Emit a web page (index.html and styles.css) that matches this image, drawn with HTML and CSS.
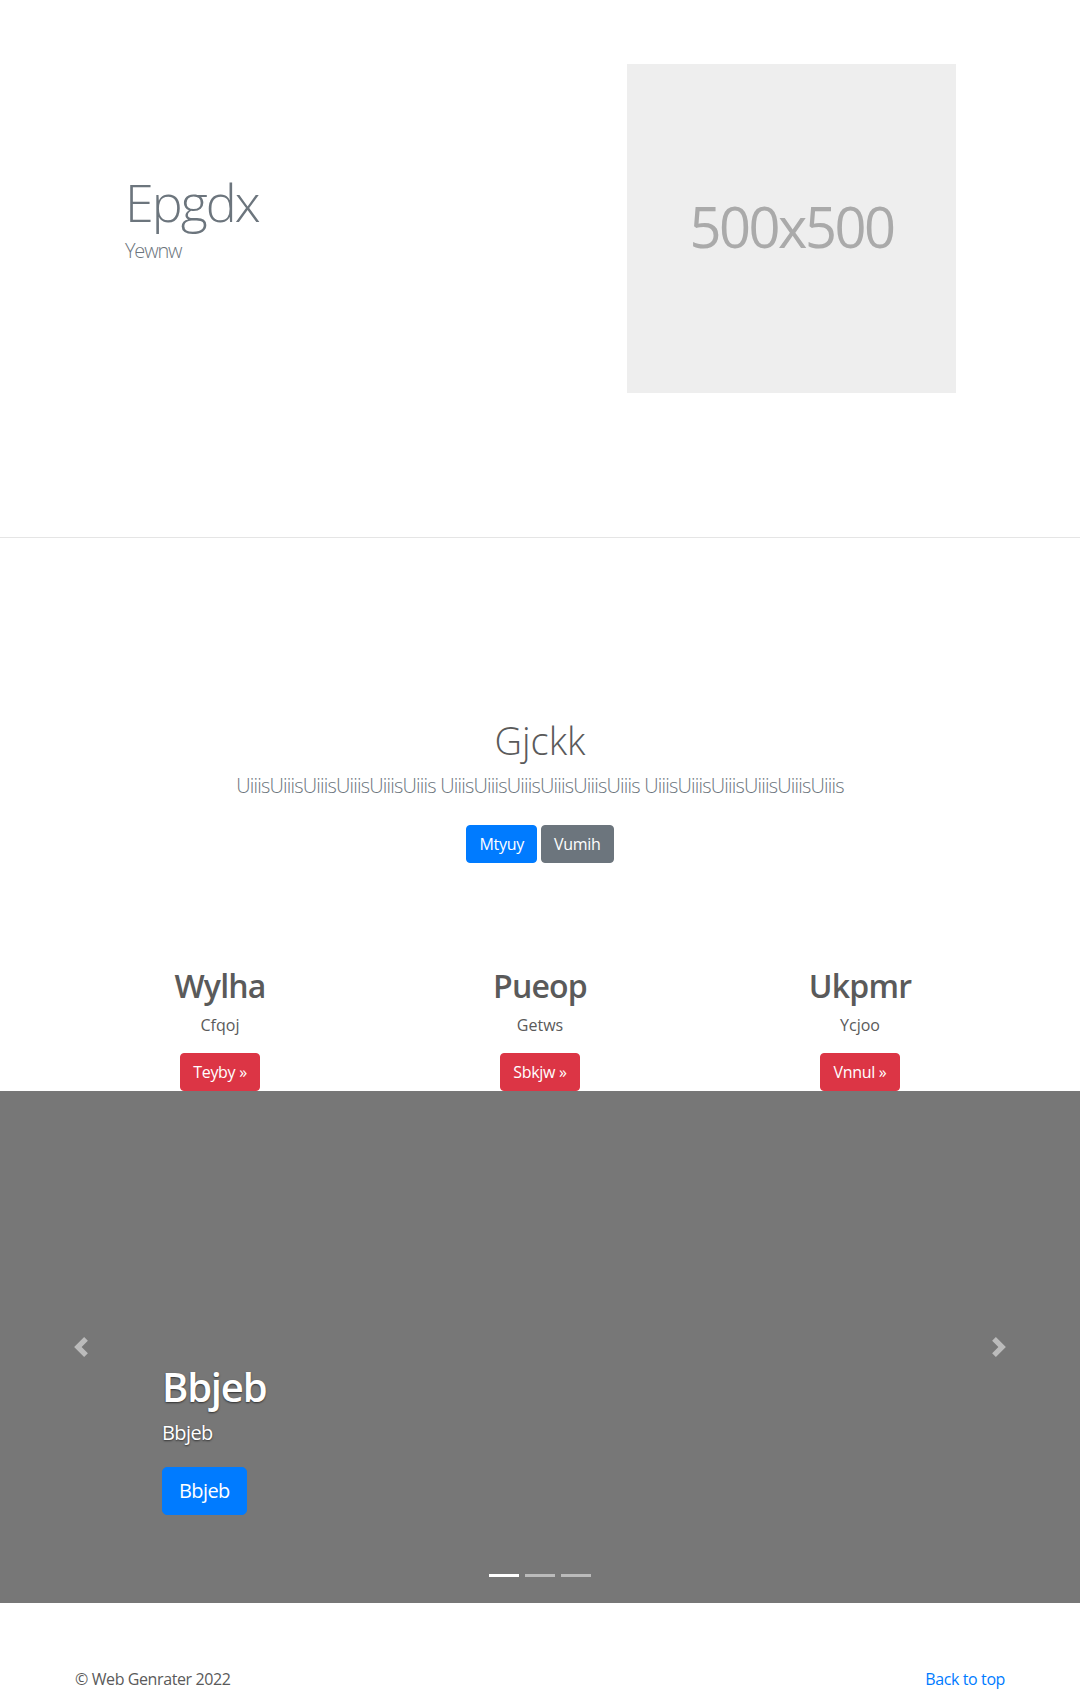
FILE: index.html
```html
<!DOCTYPE html>
<html lang="en">
<head>
<meta charset="utf-8">
<title>Web Genrater</title>
<link rel="stylesheet" href="styles.css">
</head>
<body>
<section class="hero">
  <div class="container hero-row">
    <div class="hero-text">
      <h1 class="hero-title">Epgdx</h1>
      <p class="hero-sub">Yewnw</p>
    </div>
    <div class="hero-media">
      <div class="placeholder"><span>500x500</span></div>
    </div>
  </div>
</section>

<section class="jumbo">
  <div class="jumbo-inner">
    <h1 class="jumbo-title">Gjckk</h1>
    <p class="lead">UiiisUiiisUiiisUiiisUiiisUiiis UiiisUiiisUiiisUiiisUiiisUiiis UiiisUiiisUiiisUiiisUiiisUiiis</p>
    <p class="jumbo-actions"><a class="btn btn-primary" href="#">Mtyuy</a> <a class="btn btn-secondary" href="#">Vumih</a></p>
  </div>
</section>

<section class="container marketing">
  <div class="col">
    <h2>Wylha</h2>
    <p>Cfqoj</p>
    <p class="col-action"><a class="btn btn-danger" href="#">Teyby &raquo;</a></p>
  </div>
  <div class="col">
    <h2>Pueop</h2>
    <p>Getws</p>
    <p class="col-action"><a class="btn btn-danger" href="#">Sbkjw &raquo;</a></p>
  </div>
  <div class="col">
    <h2>Ukpmr</h2>
    <p>Ycjoo</p>
    <p class="col-action"><a class="btn btn-danger" href="#">Vnnul &raquo;</a></p>
  </div>
</section>

<div class="carousel">
  <div class="carousel-item">
    <div class="carousel-caption">
      <h1>Bbjeb</h1>
      <p class="caption-text">Bbjeb</p>
      <p class="caption-action"><a class="btn btn-lg btn-primary" href="#">Bbjeb</a></p>
    </div>
  </div>
  <ol class="indicators">
    <li class="active"></li>
    <li></li>
    <li></li>
  </ol>
  <a class="control control-prev" href="#" aria-label="Previous">
    <svg class="control-icon" viewBox="0 0 8 8" width="20" height="20"><path fill="#fff" d="M5.25 0l-4 4 4 4 1.5-1.5L4.25 4l2.5-2.5L5.25 0z"/></svg>
  </a>
  <a class="control control-next" href="#" aria-label="Next">
    <svg class="control-icon" viewBox="0 0 8 8" width="20" height="20"><path fill="#fff" d="M2.75 0l-1.5 1.5L3.75 4l-2.5 2.5L2.75 8l4-4-4-4z"/></svg>
  </a>
</div>

<footer class="container footer">
  <p class="copy">&copy; Web Genrater 2022</p>
  <p class="totop"><a href="#">Back to top</a></p>
</footer>
</body>
</html>
```

FILE: styles.css
```css
* { box-sizing: border-box; }

html, body {
  margin: 0;
  padding: 0;
}

body {
  font-family: "Open Sans", "Noto Sans", "Liberation Sans", sans-serif;
  font-size: 16px;
  line-height: 1.5;
  color: #5a5a5a;
  background: #fff;
  overflow: hidden;
}

a { color: #007bff; text-decoration: none; }

.container {
  width: 960px;
  margin: 0 auto;
}

/* Hero */
.hero {
  height: 538px;
  border-bottom: 1px solid #e5e5e5;
  padding-top: 64px;
}

.hero-row {
  display: flex;
}

.hero-text {
  width: 480px;
  padding-left: 65px;
  padding-top: 107px;
}

.hero-title {
  margin: 0;
  font-size: 52px;
  font-weight: 300;
  line-height: 1.2;
  color: #6c757d;
  letter-spacing: -2px;
}

.hero-sub {
  margin: 3px 0 0;
  font-size: 20px;
  font-weight: 300;
  line-height: 1.5;
  color: #6c757d;
  letter-spacing: -1.2px;
}

.hero-media {
  width: 480px;
  padding-left: 87px;
}

.placeholder {
  width: 329px;
  height: 329px;
  background: #eee;
  display: flex;
  align-items: center;
  justify-content: center;
}

.placeholder span {
  font-size: 56px;
  color: #aaa;
  letter-spacing: -2.5px;
  margin-top: -6px;
}

/* Jumbotron */
.jumbo {
  padding-top: 180px;
  text-align: center;
}

.jumbo-inner {
  width: 640px;
  margin: 0 auto;
}

.jumbo-title {
  margin: 0 0 7px;
  font-size: 38px;
  font-weight: 300;
  line-height: 1.2;
  color: #5a5a5a;
}

.lead {
  margin: 0 0 16px;
  font-size: 20px;
  font-weight: 300;
  line-height: 1.5;
  color: #6c757d;
  white-space: nowrap;
  letter-spacing: -0.8px;
}

.jumbo-actions {
  margin: 0;
}

.btn {
  display: inline-block;
  font-size: 16px;
  line-height: 1.5;
  padding: 6px 12px;
  border: 1px solid transparent;
  border-radius: 4px;
  color: #fff;
  margin: 8px 0;
  vertical-align: middle;
  letter-spacing: -0.3px;
}

.btn-primary { background: #007bff; border-color: #007bff; }
.btn-secondary { background: #6c757d; border-color: #6c757d; }
.btn-danger { background: #dc3545; border-color: #dc3545; margin: 0; }

.btn-lg {
  font-size: 20px;
  padding: 8px 16px;
  border-radius: 5px;
  margin: 0;
  letter-spacing: -0.6px;
}

/* Marketing */
.marketing {
  display: flex;
  padding-top: 96px;
}

.col {
  flex: 1;
  text-align: center;
}

.col h2 {
  margin: 0 0 8px;
  font-size: 32px;
  font-weight: 600;
  line-height: 1.2;
  color: #5a5a5a;
  letter-spacing: -0.8px;
}

.col p {
  margin: 0 0 16px;
}

.col .col-action {
  margin: 0;
  line-height: 0;
}

/* Carousel */
.carousel {
  position: relative;
  height: 512px;
  background: #777;
  margin-bottom: 64px;
}

.carousel-item {
  height: 100%;
}

.carousel-caption {
  position: absolute;
  left: 15%;
  right: 15%;
  bottom: 48px;
  padding: 20px 0;
  color: #fff;
  text-align: left;
  text-shadow: 0 1px 2px rgba(0, 0, 0, 0.6);
}

.carousel-caption h1 {
  margin: 0 0 8px;
  font-size: 40px;
  font-weight: 600;
  line-height: 1.2;
  letter-spacing: -1.2px;
}

.caption-text {
  margin: 0 0 20px;
  font-size: 20px;
  line-height: 1.4;
  letter-spacing: -0.6px;
}

.caption-action {
  margin: 0 0 20px;
  line-height: 0;
}

.caption-action .btn { text-shadow: none; }

.indicators {
  position: absolute;
  left: 15%;
  right: 15%;
  bottom: 0;
  margin: 0 0 16px;
  padding: 0;
  list-style: none;
  display: flex;
  justify-content: center;
}

.indicators li {
  width: 30px;
  height: 3px;
  margin: 10px 3px;
  background: #fff;
  opacity: 0.5;
}

.indicators li.active { opacity: 1; }

.control {
  position: absolute;
  top: 0;
  bottom: 0;
  width: 15%;
  display: flex;
  align-items: center;
  justify-content: center;
  opacity: 0.5;
}

.control-prev { left: 0; }
.control-next { right: 0; }

.control-icon { display: block; }

/* Footer */
.footer {
  display: flex;
  justify-content: space-between;
  padding: 0 15px;
  height: 24px;
  letter-spacing: -0.4px;
}

.footer p { margin: 0; line-height: 24px; }
```
